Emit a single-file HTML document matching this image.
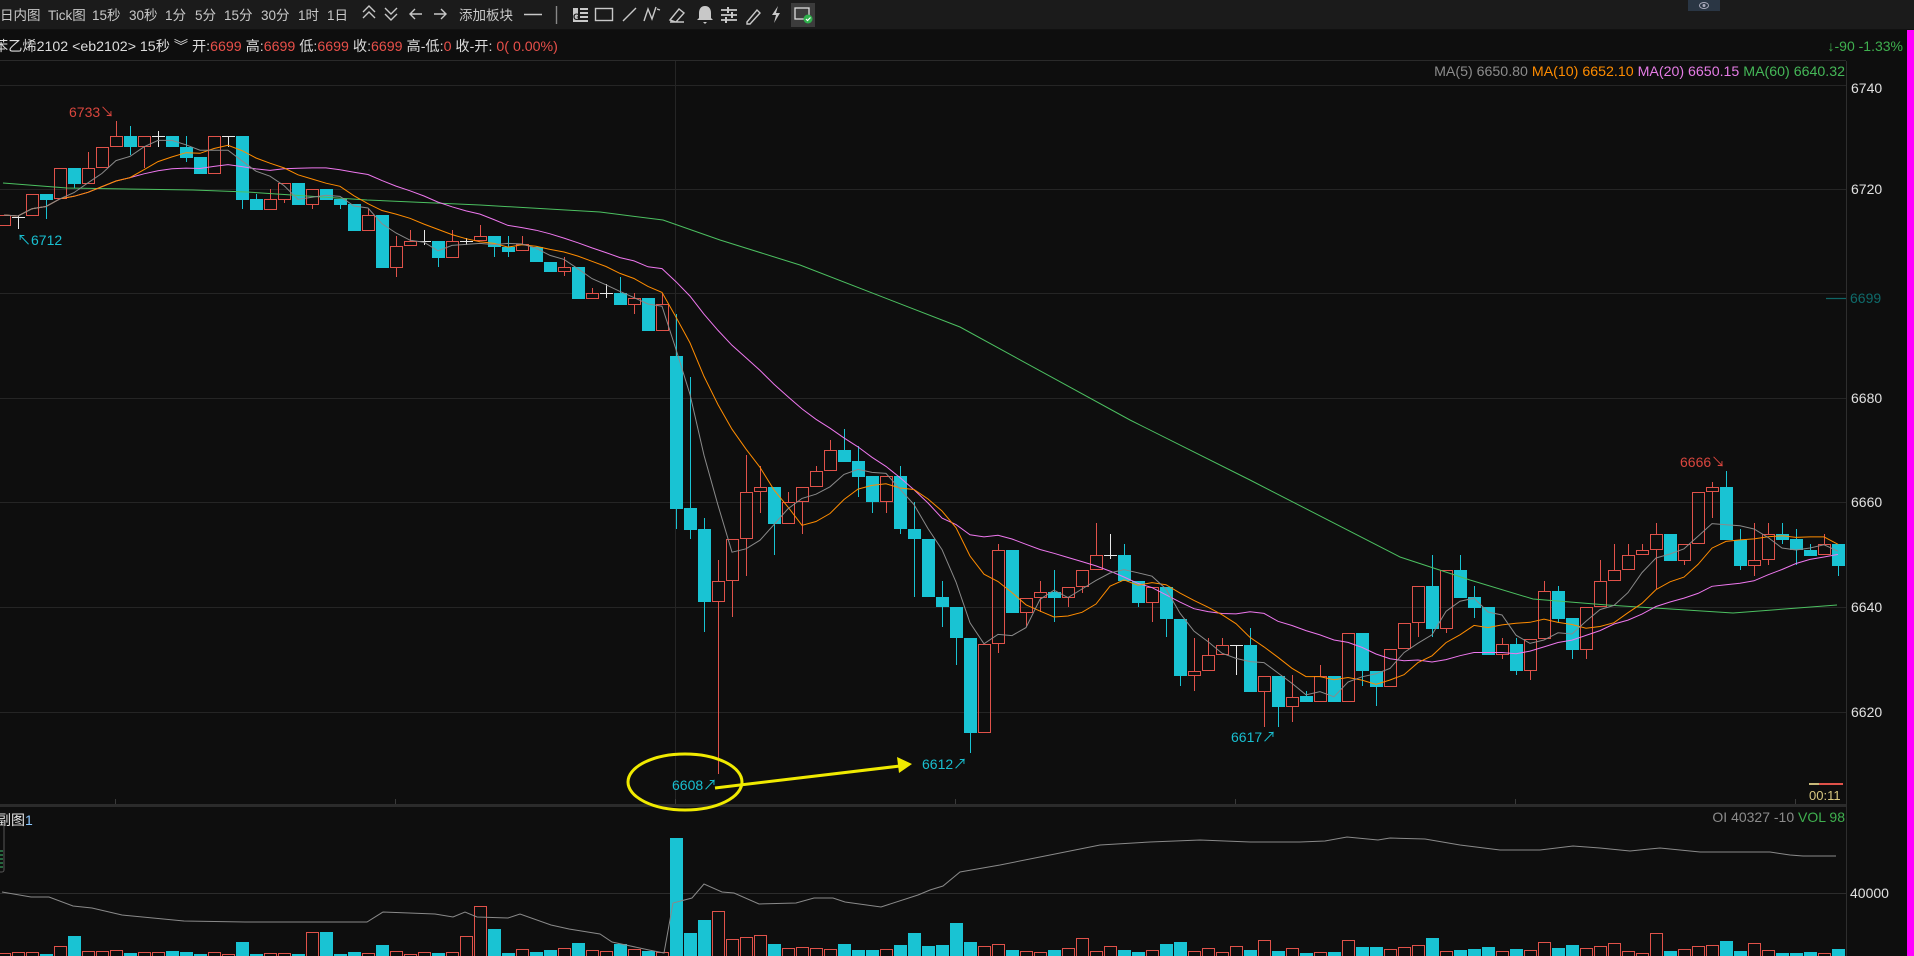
<!DOCTYPE html>
<html><head><meta charset="utf-8">
<style>
html,body{margin:0;padding:0;background:#0e0e0e;width:1914px;height:956px;overflow:hidden;font-family:"Liberation Sans","Noto Sans CJK SC",sans-serif;}
svg text{font-family:"Liberation Sans","Noto Sans CJK SC",sans-serif;}
</style></head>
<body>
<svg id="c" width="1914" height="956" xmlns="http://www.w3.org/2000/svg" style="position:absolute;left:0;top:0">
<rect x="0" y="0" width="1914" height="956" fill="#0e0e0e"/>
<rect x="0" y="0" width="1914" height="29" fill="#1b1b1b"/>
<line x1="0" y1="29.5" x2="1914" y2="29.5" stroke="#111"/>
<g font-size="13.5" fill="#c8c8c8">
<text x="0" y="20">日内图</text>
<text x="48" y="20">Tick图</text>
<text x="92" y="20">15秒</text>
<text x="129" y="20">30秒</text>
<text x="165" y="20">1分</text>
<text x="195" y="20">5分</text>
<text x="224" y="20">15分</text>
<text x="261" y="20">30分</text>
<text x="298" y="20">1时</text>
<text x="327" y="20">1日</text>
<text x="459" y="20">添加板块</text>
</g>
<g stroke="#c8c8c8" stroke-width="1.4" fill="none">
<path d="M363 12l6-6 6 6M363 18l6-6 6 6"/>
<path d="M385 8l6 6 6-6M385 14l6 6 6-6"/>
<path d="M422 14h-12M415 9l-5 5 5 5"/>
<path d="M434 14h12M441 9l5 5-5 5"/>
<path d="M524 14.5h18"/>
<path d="M556.5 6v18" stroke="#888"/>
<rect x="595.5" y="8.5" width="17" height="12"/>
<path d="M623 21l13-13"/>
<path d="M644 21l4-12 4 10 4-12M657 9l3 1"/>
<path d="M670 20l9-11 5 4-8 9zM670 22h14"/>
<path d="M721 10h16M721 15h16M721 20h16" stroke-width="1.8"/>
<path d="M747 22l10-12 3 3-10 11h-3z"/>
</g>
<g fill="#c8c8c8">
<path d="M573 8h5v12h-5zM580 8h8v2h-8zM580 12h8v2h-8zM580 16h8v2h-8zM573 20h15v2h-15z"/>
<text x="573" y="20" font-size="9" fill="#1b1b1b" font-weight="bold">G</text>
<path d="M705 6c4 0 6 3 6 7v5l2 2h-16l2-2v-5c0-4 2-7 6-7zM703 22h4l-2 2z"/>
<path d="M727 7h2v6h-2zM731 12h2v6h-2zM725 17h2v6h-2z"/>
<path d="M778 6l-6 9h4l-2 8 6-10h-4l2-7z"/>
</g>
<rect x="791" y="3" width="24" height="24" fill="#3c3c3c"/>
<rect x="795" y="8" width="14" height="11" fill="none" stroke="#ddd" stroke-width="1.3"/>
<circle cx="808" cy="19" r="4.5" fill="#2fb04c"/>
<path d="M806 19l1.5 1.5 3-3" stroke="#fff" stroke-width="1.2" fill="none"/>
<rect x="1688" y="0" width="32" height="11" fill="#2a3644"/>
<ellipse cx="1704" cy="5.5" rx="4.5" ry="3" fill="none" stroke="#aab" stroke-width="1"/>
<circle cx="1704" cy="5.5" r="1.5" fill="#aab"/>
<text x="-6" y="51" font-size="14.2" fill="#dcdcdc">苯乙烯2102 &lt;eb2102&gt; 15秒 ︾ 开:<tspan fill="#e8504a">6699</tspan> 高:<tspan fill="#e8504a">6699</tspan> 低:<tspan fill="#e8504a">6699</tspan> 收:<tspan fill="#e8504a">6699</tspan> 高-低:<tspan fill="#e8504a">0</tspan> 收-开: <tspan fill="#e8504a">0( 0.00%)</tspan></text>
<text x="1903" y="51" font-size="14" fill="#3fb04f" text-anchor="end">↓-90 -1.33%</text>
<line x1="0" y1="60.5" x2="1846" y2="60.5" stroke="#2a2a2a"/>
<rect x="1907" y="30" width="7" height="926" fill="#ff00ff"/>
<g stroke="#252525" stroke-width="1">
<line x1="0" y1="85.5" x2="1846" y2="85.5"/>
<line x1="0" y1="189.5" x2="1846" y2="189.5"/>
<line x1="0" y1="293.5" x2="1846" y2="293.5"/>
<line x1="0" y1="398.5" x2="1846" y2="398.5"/>
<line x1="0" y1="502.5" x2="1846" y2="502.5"/>
<line x1="0" y1="607.5" x2="1846" y2="607.5"/>
<line x1="0" y1="712.5" x2="1846" y2="712.5"/>
<line x1="675.5" y1="61" x2="675.5" y2="804"/>
<line x1="0" y1="893.5" x2="1846" y2="893.5" stroke="#2c2c2c"/>
</g>
<g stroke="#3a3a3a">
<line x1="115.5" y1="799" x2="115.5" y2="804"/><line x1="395.5" y1="799" x2="395.5" y2="804"/>
<line x1="675.5" y1="799" x2="675.5" y2="804"/><line x1="955.5" y1="799" x2="955.5" y2="804"/>
<line x1="1235.5" y1="799" x2="1235.5" y2="804"/><line x1="1515.5" y1="799" x2="1515.5" y2="804"/>
<line x1="1795.5" y1="799" x2="1795.5" y2="804"/>
</g>
<rect x="0" y="804" width="1846" height="3" fill="#2b2b2b"/>
<line x1="1846.5" y1="61" x2="1846.5" y2="956" stroke="#2e2e2e"/>
<g font-size="14" fill="#e0e0e0">
<text x="1851" y="93">6740</text>
<text x="1851" y="194">6720</text>
<text x="1851" y="403">6680</text>
<text x="1851" y="507">6660</text>
<text x="1851" y="612">6640</text>
<text x="1851" y="717">6620</text>
<text x="1850" y="898">40000</text>
</g>
<line x1="1826" y1="298.5" x2="1846" y2="298.5" stroke="#0f6666" stroke-width="1.2"/>
<text x="1850" y="303" font-size="14" fill="#0f6a6a">6699</text>
<text x="1845" y="76" font-size="14.2" text-anchor="end"><tspan fill="#8c8c8c">MA(5) 6650.80</tspan><tspan fill="#ff8c00">  MA(10) 6652.10</tspan><tspan fill="#e57ce5">  MA(20) 6650.15</tspan><tspan fill="#45b858">  MA(60) 6640.32</tspan></text>
<g id="g"></g>
<g font-size="14">
<text x="69" y="117" fill="#d9463e">6733↘</text>
<text x="17" y="245" fill="#19bfd0">↖6712</text>
<text x="672" y="790" fill="#19bfd0">6608↗</text>
<text x="922" y="769" fill="#19bfd0">6612↗</text>
<text x="1231" y="742" fill="#19bfd0">6617↗</text>
<text x="1680" y="467" fill="#d9463e">6666↘</text>
</g>
<ellipse cx="685" cy="782" rx="57" ry="28" fill="none" stroke="#f0ea00" stroke-width="3"/>
<line x1="715" y1="788" x2="900" y2="766" stroke="#f0ea00" stroke-width="3"/>
<path d="M912 764l-15-7 2 16z" fill="#f0ea00"/>
<rect x="1809" y="783" width="10" height="2" fill="#c8b878"/>
<rect x="1819" y="783" width="24" height="2" fill="#e0524a"/>
<text x="1809" y="800" font-size="13" fill="#d8c880">00:11</text>
<text x="-3" y="825" font-size="14" fill="#e6e6e6">副图<tspan fill="#8cc8ff">1</tspan></text>
<rect x="-2" y="820" width="6" height="52" rx="2" fill="none" stroke="#555"/>
<g stroke="#3fbf6f"><line x1="0" y1="851" x2="3" y2="851"/><line x1="0" y1="855" x2="3" y2="855"/><line x1="0" y1="859" x2="3" y2="859"/><line x1="0" y1="863" x2="3" y2="863"/><line x1="0" y1="867" x2="3" y2="867"/></g>
<text x="1845" y="822" font-size="14" text-anchor="end"><tspan fill="#8c8c8c">OI 40327 -10</tspan><tspan fill="#3fb04f">  VOL 98</tspan></text>
</svg>
<script>
var D=[
['r',215,226,215,226],['x',217,217,215,229],['r',194,216],['c',194,200,194,219],['r',168,199],['c',168,184,168,188],['r',168,184,152,184],['r',147,168],['r',136,147,121,147],['c',136,147,126,155],
['r',136,147,136,168],['x',136,136,131,147],['c',136,147],['c',147,158,136,162],['c',157,174],['r',136,174],['x',136,136,136,147],['c',136,200,136,209],['c',199,210,194,210],['r',199,210,189,210],
['r',183,200,183,203],['c',183,205],['r',189,205,189,209],['c',189,200],['c',199,205,199,209],['c',204,231],['r',215,231,209,231],['c',215,268],['r',246,268,236,277],['r',241,246,230,246],
['x',241,241,230,245],['c',241,258,241,267],['r',241,258,230,258],['x',241,241,238,245],['r',236,241,225,241],['c',236,247,236,257],['c',247,252,236,257],['r',244,251,236,251],['c',247,262],['c',262,272],
['r',267,272,257,276],['c',267,299],['r',293,299,288,299],['x',293,293,284,298],['c',293,305,277,305],['r',298,305,293,314],['c',298,331],['r',304,331,293,331],['c',356,509,314,529],['c',508,530,377,539],
['c',529,602,518,632],['r',581,602,560,774],['r',539,581,539,617],['r',492,539,455,576],['r',487,492,466,513],['c',487,524,487,555],['r',502,524,492,524],['r',487,502,487,534],['r',471,487,466,487],['r',450,471,440,471],
['c',450,462,429,462],['c',461,477,446,497],['c',476,502,476,513],['r',476,502,476,513],['c',476,529,466,534],['c',529,539,502,597],['c',539,597],['c',597,607,581,627],['c',607,638,607,665],['c',638,733,638,753],
['r',644,733],['r',550,644,544,653],['c',550,613],['r',598,613,598,627],['r',592,598,581,612],['c',592,598,570,622],['r',587,598,587,607],['r',570,587,570,593],['r',555,570,523,570],['x',555,555,534,559],
['c',555,581,544,581],['c',581,603,581,607],['r',587,603,587,622],['c',587,619,587,637],['c',619,676,619,686],['r',671,676,638,691],['r',655,671,638,671],['r',645,655,638,655],['x',645,645,645,675],['c',645,692,628,692],
['r',676,692,676,727],['c',676,707,676,727],['r',697,707,675,722],['c',696,702,691,702],['r',676,702,665,702],['c',676,702],['r',633,702],['c',633,671,633,686],['c',671,687,671,706],['r',649,687],
['r',623,649],['r',586,623,586,637],['c',586,629,555,637],['r',570,629,570,633],['c',570,598,555,598],['c',597,608,586,618],['c',607,655],['r',644,655,638,659],['c',644,671,638,675],['r',639,671,639,680],
['r',591,639,581,639],['c',591,619,586,623],['c',618,650,618,659],['r',607,650,607,659],['r',581,607,560,607],['r',570,581,544,581],['r',555,570,544,570],['r',550,555,544,555],['r',534,550,523,589],['c',534,561],
['r',544,561,544,565],['r',492,544],['r',487,492,482,518],['c',487,540,471,540],['c',540,566,529,570],['r',560,566,523,576],['r',534,560,523,565],['c',534,540,523,544],['c',539,550,529,565],['c',550,556,544,556],
['r',544,555,534,555],['c',544,566,544,576]];
var V=[3,4,4,2,10,20,5,5,6,3,4,4,5,4,2,4,2,14,2,3,3,2,24,24,2,4,3,11,5,2,4,3,4,20,50,27,3,7,4,6,8,13,6,5,12,7,5,4,118,23,36,45,17,19,21,12,8,9,8,7,12,6,6,7,11,23,10,11,33,
14,10,12,6,5,4,6,8,18,5,10,6,4,6,12,14,5,8,4,10,6,16,5,8,
3,4,4,16,9,9,7,9,11,18,5,6,7,9,5,7,6,14,8,11,8,10,13,5,3,23,5,7,10,11,15,5,13,6,3,3,4,3,7];
var RED='#e0524a',CY='#19c3d3',s='';
function X(i){return 4+14*i;}
var closes=[];
D.forEach(function(d,i){
 var t=d[0],top=d[1],bot=d[2],hi=d.length>3?d[3]:top,lo=d.length>3?d[4]:bot,x=X(i);
 closes.push(t=='r'?top:(t=='c'?bot:top));
 var col=t=='r'?RED:(t=='c'?CY:'#e8e8e8');
 if(hi<top)s+='<line x1="'+(x+.5)+'" y1="'+hi+'" x2="'+(x+.5)+'" y2="'+top+'" stroke="'+col+'"/>';
 if(lo>bot)s+='<line x1="'+(x+.5)+'" y1="'+bot+'" x2="'+(x+.5)+'" y2="'+lo+'" stroke="'+col+'"/>';
 if(t=='x'){s+='<line x1="'+(x-6)+'" y1="'+(top+.5)+'" x2="'+(x+7)+'" y2="'+(top+.5)+'" stroke="'+col+'"/>';
  s+='<line x1="'+(x+.5)+'" y1="'+hi+'" x2="'+(x+.5)+'" y2="'+lo+'" stroke="'+col+'"/>';}
 else if(t=='r')s+='<rect x="'+(x-5.5)+'" y="'+(top+.5)+'" width="12" height="'+Math.max(bot-top-1,1)+'" fill="none" stroke="'+RED+'"/>';
 else s+='<rect x="'+(x-6)+'" y="'+top+'" width="13" height="'+Math.max(bot-top,2)+'" fill="'+CY+'"/>';
 var h=V[i]||3;
 if(t=='c')s+='<rect x="'+(x-6)+'" y="'+(956-h)+'" width="13" height="'+h+'" fill="'+CY+'"/>';
 else s+='<rect x="'+(x-5.5)+'" y="'+(956.5-h)+'" width="12" height="'+h+'" fill="none" stroke="'+RED+'"/>';
});
function ma(n,col){var p=[];for(var i=0;i<closes.length;i++){var a=0,c=0;for(var j=Math.max(0,i-n+1);j<=i;j++){a+=closes[j];c++;}p.push(X(i)+','+(a/c).toFixed(1));}
 s+='<polyline points="'+p.join(' ')+'" fill="none" stroke="'+col+'" stroke-width="1"/>';}
s+='<polyline points="3,183 67,188 193,190 247,192 367,200 480,205 600,212 663,220 720,240 800,265 960,327 1130,420 1250,480 1400,557 1470,580 1533,599 1607,605 1733,613 1837,605" fill="none" stroke="#4cc061"/>';
ma(20,'#ee77ee');ma(10,'#ff8c00');ma(5,'#8a8a8a');
s+='<polyline points="2,892 31,897 49,897 73,906 92,908 122,915 184,921 245,922 367,922 383,912 435,914 453,917 465,912 477,917 508,918 520,914 551,925 569,929 600,934 612,942 649,950 664,953 673,903 692,898 704,884 722,892 734,893 759,904 796,903 814,898 833,898 845,902 881,907 918,895 930,890 943,886 960,872 1000,865 1050,855 1100,845 1150,842 1200,840 1250,842 1300,842 1325,841 1347,837 1378,840 1390,838 1425,839 1460,845 1500,850 1540,850 1573,846 1600,848 1630,851 1660,848 1700,852 1720,852 1770,852 1790,855 1803,856 1836,856" fill="none" stroke="#8a8a8a"/>';
document.getElementById('g').innerHTML=s;
</script>
</body></html>
